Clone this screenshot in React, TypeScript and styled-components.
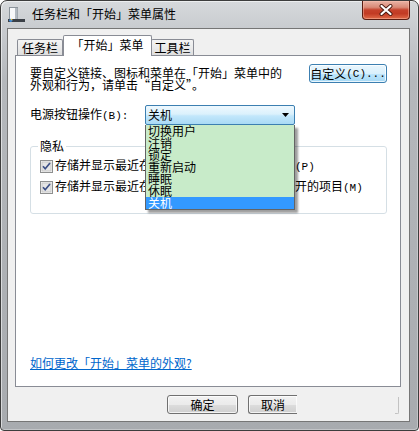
import React from "react";
import styled, { createGlobalStyle } from "styled-components";

const GlobalStyle = createGlobalStyle`
  html, body { margin: 0; padding: 0; background: #ffffff; }
  body {
    font-family: "Noto Sans CJK SC", "Liberation Sans", sans-serif;
    font-size: 12px;
    color: #000;
  }
  * { box-sizing: border-box; }
`;

const Window = styled.div`
  width: 419px;
  height: 431px;
  border: 1px solid #3d3d3d;
  border-radius: 7px 7px 4px 4px;
  padding: 0 8px 8px 6px;
  display: flex;
  flex-direction: column;
  background: linear-gradient(to bottom, #d6d9dc 0px, #c9ccd0 26px, #b5b8bc 80px, #a8abaf 100%);
  box-shadow: inset 1px 1px 0 rgba(255, 255, 255, 0.55), inset -1px -1px 0 rgba(255, 255, 255, 0.3);
  overflow: hidden;
`;

const TitleBar = styled.div`
  height: 27px;
  display: flex;
  align-items: flex-start;
`;

const TitleIcon = styled.svg`
  margin: 5px 0 0 1px;
  flex: none;
`;

const TitleText = styled.div`
  margin: 5px 0 0 7px;
  line-height: 16px;
  font-size: 12px;
  color: #000;
`;

const CloseButton = styled.div`
  margin-left: auto;
  width: 48px;
  height: 19px;
  border: 1px solid #5a1d12;
  border-top: none;
  border-radius: 0 0 4px 4px;
  background: linear-gradient(
    to bottom,
    #e9b3a6 0%,
    #d98a77 35%,
    #c5412b 50%,
    #c23b24 70%,
    #e06a48 100%
  );
  box-shadow: inset 0 0 0 1px rgba(255, 200, 180, 0.45);
  display: flex;
  align-items: center;
  justify-content: center;
`;

const Client = styled.div`
  flex: 1;
  display: flex;
  flex-direction: column;
  border: 1px solid #767676;
  background: #f0f0f0;
  padding: 6px 8px 0 7px;
`;

const TabStrip = styled.div`
  display: flex;
  align-items: flex-end;
  height: 20px;
  padding-left: 2px;
  position: relative;
  z-index: 2;
`;

const Tab = styled.div<{ $w: number; $active?: boolean; $ml?: number }>`
  width: ${(p) => p.$w}px;
  height: ${(p) => (p.$active ? 21 : 16)}px;
  margin-bottom: ${(p) => (p.$active ? -1 : 0)}px;
  margin-left: ${(p) => p.$ml ?? 0}px;
  border: 1px solid #898c95;
  border-bottom: none;
  border-radius: 2px 2px 0 0;
  background: ${(p) =>
    p.$active ? "#ffffff" : "linear-gradient(to bottom, #f4f4f4 0%, #ebebeb 50%, #dedede 100%)"};
  display: flex;
  justify-content: center;
  align-items: ${(p) => (p.$active ? "flex-start" : "center")};
  padding-top: ${(p) => (p.$active ? 2 : 0)}px;
  line-height: 14px;
  font-size: 12px;
  position: relative;
  z-index: ${(p) => (p.$active ? 3 : 1)};
`;

const Panel = styled.div`
  flex: 1;
  background: #ffffff;
  border: 1px solid #898c95;
  display: flex;
  flex-direction: column;
  padding: 8px 13px 17px 14px;
  position: relative;
  z-index: 1;
`;

const IntroRow = styled.div`
  display: flex;
  justify-content: space-between;
  align-items: flex-start;
`;

const IntroText = styled.div`
  width: 258px;
  margin-top: 3px;
  line-height: 12px;
`;

const WinButton = styled.div<{ $w: number; $hot?: boolean; $cut?: boolean }>`
  width: ${(p) => p.$w}px;
  height: 19px;
  border: 1px solid ${(p) => (p.$hot ? "#3c7fb1" : "#707070")};
  ${(p) => (p.$cut ? "border-right: none;" : "")}
  border-radius: ${(p) => (p.$cut ? "3px 0 0 3px" : "3px")};
  background: ${(p) =>
    p.$hot
      ? "linear-gradient(to bottom, #eaf6fd 0%, #d9f0fc 50%, #bee6fd 51%, #a7d9f5 100%)"
      : "linear-gradient(to bottom, #f2f2f2 0%, #ebebeb 50%, #dddddd 51%, #cfcfcf 100%)"};
  box-shadow: inset 0 0 0 1px rgba(255, 255, 255, 0.75);
  display: flex;
  align-items: center;
  justify-content: center;
  line-height: 12px;
  font-size: 12px;
  flex: none;
`;

const PowerRow = styled.div`
  display: flex;
  align-items: center;
  margin-top: 14px;
`;

const FieldLabel = styled.div`
  width: 115px;
  line-height: 12px;
`;

const SelectWrap = styled.div`
  position: relative;
  width: 150px;
  height: 20px;
`;

const SelectBox = styled.div`
  height: 20px;
  border: 1px solid #3c7fb1;
  border-radius: 2px;
  background: linear-gradient(to bottom, #eef8fe 0%, #dbf1fc 45%, #c2e7fb 55%, #a9daf5 100%);
  display: flex;
  align-items: center;
  padding: 0 5px 0 2px;
  line-height: 12px;
`;

const Arrow = styled.svg`
  margin-left: auto;
`;

const DropList = styled.div`
  position: absolute;
  top: 100%;
  left: 0;
  width: 150px;
  border: 1px solid #646464;
  border-top: none;
  background: #c8ebc9;
  box-shadow: 3px 3px 2px rgba(0, 0, 0, 0.38);
  z-index: 10;
`;

const DropItem = styled.div<{ $selected?: boolean }>`
  height: 12px;
  line-height: 12px;
  padding-left: 2px;
  overflow: hidden;
  font-size: 12px;
  background: ${(p) => (p.$selected ? "#3399ff" : "transparent")};
  color: ${(p) => (p.$selected ? "#ffffff" : "#000000")};
`;

const Group = styled.fieldset`
  margin: 15px 0 0 0;
  border: 1px solid #d5dfe5;
  border-radius: 3px;
  padding: 7px 0 19px 9px;
  min-width: 0;
`;

const Legend = styled.legend`
  padding: 0 2px;
  margin-left: -2px;
  line-height: 12px;
  font-size: 12px;
`;

const CheckRow = styled.div<{ $first?: boolean }>`
  display: flex;
  align-items: center;
  height: 14px;
  gap: 2px;
  margin-top: ${(p) => (p.$first ? 0 : 7)}px;
  line-height: 12px;
  white-space: nowrap;
`;

const Link = styled.a`
  margin-top: auto;
  color: #0066cc;
  text-decoration: underline;
  line-height: 12px;
  font-size: 12px;
  align-self: flex-start;
`;

const Footer = styled.div`
  height: 34px;
  display: flex;
  justify-content: flex-end;
  align-items: flex-start;
  padding-top: 8px;
`;

const ApplyGhost = styled.div`
  width: 76px;
  height: 16px;
  margin: 2px 2px 0 26px;
  display: flex;
  &::after {
    content: "";
    margin-left: auto;
    width: 3px;
    height: 16px;
    border-right: 1px solid #c2c2c2;
    border-bottom: 1px solid #c2c2c2;
    border-radius: 0 0 2px 0;
  }
`;

const Mono = styled.span`
  font-family: "Liberation Mono", "DejaVu Sans Mono", monospace;
  font-size: 11px;
`;

const Checkbox = () => (
  <svg width="13" height="13" viewBox="0 0 13 13" style={{ flex: "none" }}>
    <rect x="0.5" y="0.5" width="12" height="12" fill="#f4f4f4" stroke="#8e8f8f" />
    <rect x="2" y="2" width="9" height="9" fill="#e6e6e6" stroke="#b4b4b4" strokeWidth="0.6" />
    <path d="M3 6.2 L5.2 8.8 L10 3" fill="none" stroke="#3c4f86" strokeWidth="1.7" />
  </svg>
);

const items = ["切换用户", "注销", "锁定", "重新启动", "睡眠", "休眠", "关机"];

export default function App() {
  return (
    <>
      <GlobalStyle />
      <Window>
        <TitleBar>
          <TitleIcon width="17" height="17" viewBox="0 0 17 17">
            <rect x="1.5" y="1.5" width="8" height="13" fill="#f7f8f9" stroke="#8c949b" />
            <rect x="7" y="2" width="2.5" height="12" fill="#b2b9c0" />
            <rect x="0" y="13" width="17" height="3" fill="#3b4047" />
            <circle cx="2.8" cy="14.3" r="1.6" fill="#3c8be0" />
            <circle cx="3.6" cy="13.6" r="0.8" fill="#f2c230" />
          </TitleIcon>
          <TitleText>任务栏和「开始」菜单属性</TitleText>
          <CloseButton>
            <svg width="16" height="12" viewBox="0 0 16 12">
              <path d="M3.5 2 L12.5 10 M12.5 2 L3.5 10" stroke="#4a1a10" strokeWidth="4" strokeLinecap="round" />
              <path d="M3.5 2 L12.5 10 M12.5 2 L3.5 10" stroke="#ffffff" strokeWidth="2.2" strokeLinecap="round" />
            </svg>
          </CloseButton>
        </TitleBar>
        <Client>
          <TabStrip>
            <Tab $w={46}>任务栏</Tab>
            <Tab $w={89} $active>「开始」菜单</Tab>
            <Tab $w={43} $ml={-1}>工具栏</Tab>
          </TabStrip>
          <Panel>
            <IntroRow>
              <IntroText>要自定义链接、图标和菜单在「开始」菜单中的外观和行为，请单击“自定义”。</IntroText>
              <WinButton $w={78} $hot>
                自定义<Mono>(C)...</Mono>
              </WinButton>
            </IntroRow>
            <PowerRow>
              <FieldLabel>
                电源按钮操作<Mono>(B):</Mono>
              </FieldLabel>
              <SelectWrap>
                <SelectBox>
                  关机
                  <Arrow width="7" height="4" viewBox="0 0 7 4">
                    <path d="M0 0 H7 L3.5 4 Z" fill="#000" />
                  </Arrow>
                </SelectBox>
                <DropList>
                  {items.map((t, i) => (
                    <DropItem key={t} $selected={i === items.length - 1}>
                      {t}
                    </DropItem>
                  ))}
                </DropList>
              </SelectWrap>
            </PowerRow>
            <Group>
              <Legend>隐私</Legend>
              <CheckRow $first>
                <Checkbox />
                <span>
                  存储并显示最近在「开始」菜单中打开的程序<Mono>(P)</Mono>
                </span>
              </CheckRow>
              <CheckRow>
                <Checkbox />
                <span>
                  存储并显示最近在「开始」菜单和任务栏中打开的项目<Mono>(M)</Mono>
                </span>
              </CheckRow>
            </Group>
            <Link href="#">如何更改「开始」菜单的外观?</Link>
          </Panel>
          <Footer>
            <WinButton $w={71}>确定</WinButton>
            <WinButton $w={49} $cut style={{ marginLeft: 10 }}>
              取消
            </WinButton>
            <ApplyGhost />
          </Footer>
        </Client>
      </Window>
    </>
  );
}
